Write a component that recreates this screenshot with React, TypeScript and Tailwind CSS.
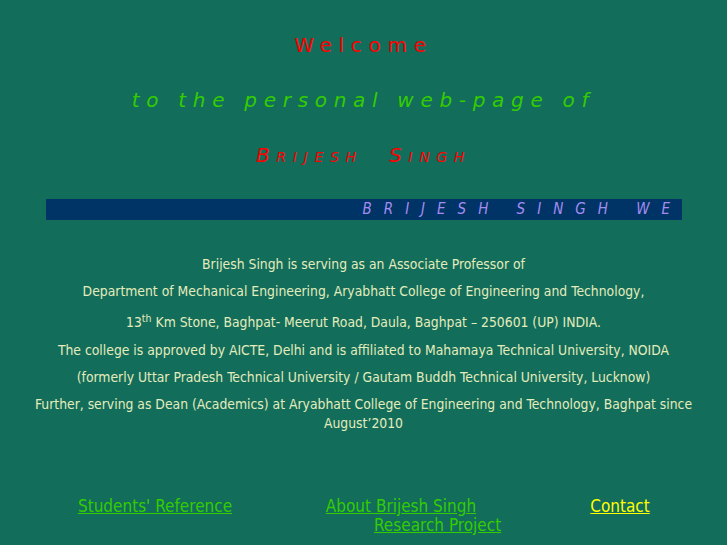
import React from 'react'

const about = [
  'Department of Mechanical Engineering, Aryabhatt College of Engineering and Technology,',
]

export default function App() {
  return (
    <div className="min-h-[545px] w-full bg-[#136d5b] pt-[18px] text-center font-['DejaVu_Sans',sans-serif]">
      {/* heading */}
      <div className="text-[20px] leading-[55px] tracking-[6.7px] text-[#ff0000]">Welcome</div>
      <div className="text-[20px] leading-[55px] tracking-[6.7px] text-[#33cc00] italic">
        to the personal web-page of
      </div>
      <div className="text-[20px] leading-[55px] tracking-[6.7px] text-[#ff0000] italic [font-variant:small-caps]">
        Brijesh{'\u00a0\u00a0'}Singh
      </div>

      {/* scrolling band */}
      <div className="mx-auto mt-[16px] h-[21px] w-[636px] overflow-hidden bg-[#003366] text-left">
        <div className="whitespace-nowrap pl-[317px] font-['DejaVu_Sans_Condensed','DejaVu_Sans',sans-serif] text-[15px] leading-[21px] tracking-[12px] text-[#a48cf0] italic font-stretch-condensed">
          BRIJESH SINGH WE
        </div>
      </div>

      {/* about */}
      <div className="mt-[35px] px-[8px] font-['DejaVu_Sans_Condensed','DejaVu_Sans',sans-serif] text-[13.8px] leading-[19px] text-[#e3ecbc] font-stretch-condensed">
        <p>Brijesh Singh is serving as an Associate Professor of</p>
        {about.map((l) => (
          <p key={l} className="mt-[8px]">{l}</p>
        ))}
        <p className="mt-[8px] pt-[4px] pb-[1px]">
          13<sup className="text-[10.5px]">th</sup> Km Stone, Baghpat- Meerut Road, Daula, Baghpat – 250601 (UP) INDIA.
        </p>
        <p className="mt-[8px]">
          The college is approved by AICTE, Delhi and is affiliated to Mahamaya Technical University, NOIDA
        </p>
        <p className="mt-[8px]">
          (formerly Uttar Pradesh Technical University / Gautam Buddh Technical University, Lucknow)
        </p>
        <p className="mt-[8px]">
          Further, serving as Dean (Academics) at Aryabhatt College of Engineering and Technology, Baghpat since
          August’2010
        </p>
      </div>

      {/* links */}
      <div className="mt-[64px] font-['DejaVu_Sans_Condensed','DejaVu_Sans',sans-serif] text-[17px] leading-[19px] font-stretch-condensed">
        <div className="flex">
          <div className="w-[310px] text-center">
            <a href="#" className="text-[#33cc00] underline">Students' Reference</a>
          </div>
          <div className="w-[182px] text-center">
            <a href="#" className="text-[#33cc00] underline">About Brijesh Singh</a>
          </div>
          <div className="ml-[21px] w-[214px] text-center">
            <a href="#" className="text-[#ffff00] underline">Contact</a>
          </div>
        </div>
        <div className="pl-[374px] text-left">
          <a href="#" className="text-[#33cc00] underline">Research Project</a>
        </div>
      </div>
    </div>
  )
}
